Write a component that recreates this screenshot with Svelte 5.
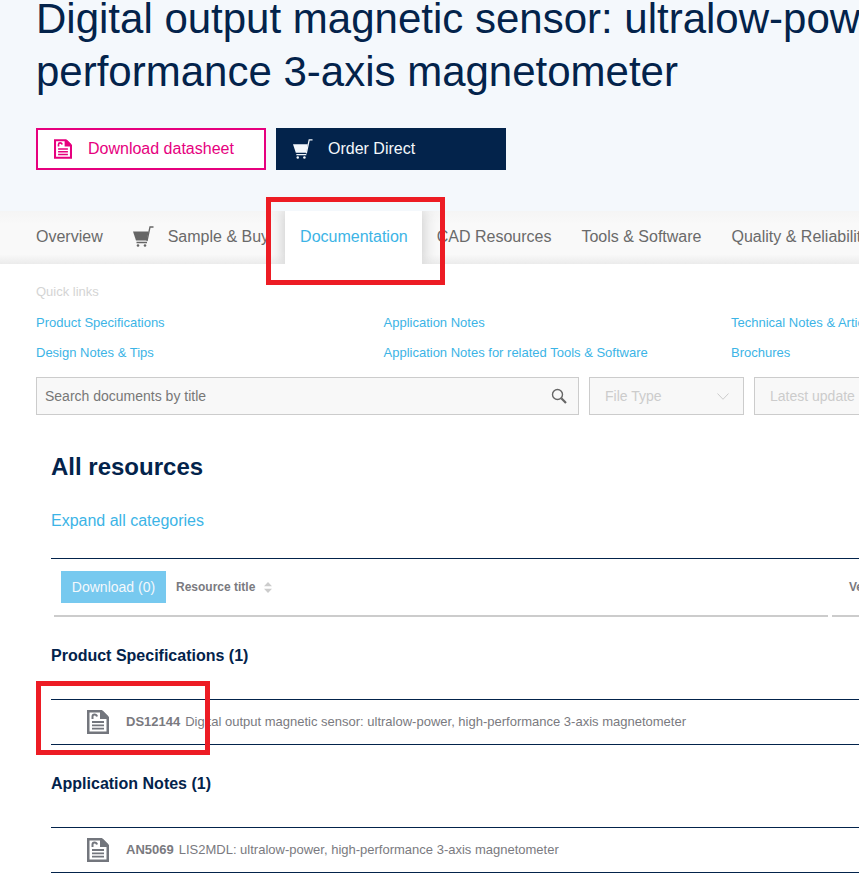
<script>
  // Product page, documentation tab. Red boxes are annotations over the page.
  const tabs = [
    { label: "Overview" },
    { label: "Sample & Buy", cart: true },
    { label: "Documentation", active: true },
    { label: "CAD Resources" },
    { label: "Tools & Software" },
    { label: "Quality & Reliability" },
  ];
  const quickLinks = [
    "Product Specifications", "Application Notes", "Technical Notes & Articles",
    "Design Notes & Tips", "Application Notes for related Tools & Software", "Brochures",
  ];
  const groups = [
    { title: "Product Specifications (1)", code: "DS12144", text: "Digital output magnetic sensor: ultralow-power, high-performance 3-axis magnetometer" },
    { title: "Application Notes (1)", code: "AN5069", text: "LIS2MDL: ultralow-power, high-performance 3-axis magnetometer" },
  ];
</script>

{#snippet docIcon(cls)}
  <svg class={cls} viewBox="0 0 22 24" width="22" height="24" aria-hidden="true">
    <path fill="currentColor" fill-rule="evenodd" d="M0 0H15L22 7V24H0ZM2.500 2.500V21.500H19.500V9H13V2.500Z" />
    <path fill="currentColor" d="M16 1L21.500 6.500H16Z" />
    <path fill="none" stroke="currentColor" stroke-width="2" d="M5.500 9V6.500Q5.500 4.500 7.500 4.500T10 6.500" />
    <path fill="none" stroke="currentColor" stroke-width="1.800" d="M5 12H17M5 15.300H17M5 18.600H17" />
  </svg>
{/snippet}

{#snippet cartIcon(cls)}
  <svg class={cls} viewBox="0 0 21 21" width="21" height="21" aria-hidden="true">
    <path fill="currentColor" d="M0 5.500H15.500L14 14.500H3Z" />
    <path fill="none" stroke="currentColor" stroke-width="1.300" d="M14 16.500H3.500M14 15L17 1H20.500" />
    <circle cx="5" cy="19.500" r="1.300" fill="currentColor" />
    <circle cx="12" cy="19.500" r="1.300" fill="currentColor" />
  </svg>
{/snippet}

<div class="page">
  <header class="hero">
    <h1>Digital output magnetic sensor: ultralow-power, high-<br />performance 3-axis magnetometer</h1>
    <div class="actions">
      <button class="btn btn-outline">{@render docIcon("btn-icon")}Download datasheet</button>
      <button class="btn btn-dark">{@render cartIcon("btn-icon")}Order Direct</button>
    </div>
  </header>

  <nav class="tabs">
    {#each tabs as t}
      <div class="tab" class:active={t.active} class:has-cart={t.cart}>
        {#if t.cart}{@render cartIcon("tab-cart")}{/if}
        {t.label}
      </div>
    {/each}
  </nav>

  <section class="quick">
    <div class="quick-title">Quick links</div>
    <div class="quick-grid">
      {#each quickLinks as q}<span class="link">{q}</span>{/each}
    </div>
  </section>

  <div class="filters">
    <div class="field search">
      <span>Search documents by title</span>
      <svg viewBox="0 0 16 16" width="16" height="16" aria-hidden="true">
        <circle cx="6.500" cy="6.500" r="5" fill="none" stroke="#666" stroke-width="1.400" />
        <path d="M10.300 10.300L15 15" stroke="#666" stroke-width="2.200" />
      </svg>
    </div>
    <div class="field select">
      <span>File Type</span>
      <svg viewBox="0 0 12 7" width="12" height="7" aria-hidden="true">
        <path d="M.5.500L6 6.300L11.500.500" fill="none" stroke="#ccc" />
      </svg>
    </div>
    <div class="field select last"><span>Latest update</span></div>
  </div>

  <main class="resources">
    <h2>All resources</h2>
    <div class="expand">Expand all categories</div>

    <div class="table-head">
      <div class="download">Download (0)</div>
      <div class="col-title">
        Resource title
        <svg viewBox="0 0 8 11" width="8" height="11" aria-hidden="true">
          <path d="M4 0L8 4.300H0ZM4 11L0 6.700H8Z" fill="#ccc" />
        </svg>
      </div>
      <div class="col-version">Version</div>
    </div>
    <div class="head-rule"><i></i><i></i></div>

    {#each groups as g}
      <h3>{g.title}</h3>
      <div class="row">
        {@render docIcon("row-icon")}
        <b>{g.code}</b>
        <span>{g.text}</span>
      </div>
    {/each}
  </main>

  <div class="mark mark-tab"></div>
  <div class="mark mark-row"></div>
</div>

<style>
  :global(body) { margin: 0; background: #fff; }
  .page {
    position: relative; width: 859px; height: 888px; overflow: hidden;
    font-family: "Liberation Sans", Arial, sans-serif; background: #fff;
  }

  .hero { height: 211px; background: #f4f8fc; padding-left: 36px; box-sizing: border-box; overflow: hidden; }
  h1 {
    margin: -8px 0 0; font-size: 42px; line-height: 53px; font-weight: 400; color: #03234b;
    white-space: nowrap; letter-spacing: 0;
  }
  .actions { display: flex; gap: 10px; margin-top: 30px; }
  .btn {
    width: 230px; height: 42px; box-sizing: border-box; display: flex; align-items: center;
    padding: 0; font: inherit; font-size: 16px; cursor: pointer; border: 0;
  }
  .btn-outline { background: #fff; border: 2px solid #e6007e; color: #e6007e; padding-left: 16px; }
  .btn-outline .btn-icon { margin-right: 16px; width: 18px; height: 20px; }
  .btn-dark { background: #03234b; color: #f4f8fc; padding-left: 17px; }
  .btn-dark .btn-icon { margin-right: 15px; width: 20px; height: 20px; }

  .tabs {
    display: flex; height: 53px; padding-left: 21px; white-space: nowrap; overflow: hidden;
    background: linear-gradient(#f5f5f5, #f9f9f9 25%, #f9f9f9 82%, #ebebeb);
    font-size: 16px; color: #6a6a6a;
  }
  .tab { display: flex; align-items: center; padding: 0 15px 2px; flex: none; }
  .tab.has-cart { padding-right: 16px; }
  .tab-cart { width: 21px; height: 21px; margin-right: 14px; color: #666; }
  .tab.active {
    background: #fff; color: #3cb4e6; position: relative; padding-right: 14px;
    box-shadow: 0 0 14px 1px #c8c8c8;
  }

  .quick { padding: 20px 0 0 36px; }
  .quick-title { font-size: 13px; line-height: 16px; color: #d4d4d4; }
  .quick-grid {
    display: grid; grid-template-columns: repeat(3, 347.500px); row-gap: 15px; margin-top: 15px;
    font-size: 13px; line-height: 15px; white-space: nowrap;
  }
  .link { color: #3cb4e6; }

  .filters { display: flex; gap: 10px; margin: 17px 0 0 36px; }
  .field {
    height: 38px; box-sizing: border-box; border: 1px solid #ccc; background: #f8f8f8;
    display: flex; align-items: center; justify-content: space-between; flex: none; font-size: 14px;
  }
  .search { width: 543px; padding: 0 11px 0 8px; color: #777; }
  .select { width: 155px; padding: 0 14px 0 15px; color: #ccc; }
  .select.last { width: 160px; }

  .resources { padding-left: 51px; }
  h2 { margin: 39px 0 0; font-size: 24px; line-height: 26px; font-weight: 700; color: #03234b; }
  .expand { margin-top: 31px; font-size: 16px; line-height: 20px; color: #3cb4e6; }

  .table-head {
    display: flex; align-items: center; height: 56px; margin-top: 27px; padding-left: 10px;
    border-top: 1px solid #03234b; white-space: nowrap;
  }
  .download {
    width: 105px; height: 32px; background: #77c9ef; color: #f4f8fc; font-size: 14px;
    display: flex; align-items: center; justify-content: center; flex: none;
  }
  .col-title {
    display: flex; align-items: center; gap: 9px; margin-left: 10px; width: 673px; flex: none;
    font-size: 12px; font-weight: 700; color: #7a7a80;
  }
  .col-version { font-size: 12px; font-weight: 700; color: #7a7a80; }
  .head-rule { display: flex; gap: 4px; height: 2px; margin-left: 3px; }
  .head-rule i { display: block; background: #ccc; width: 774px; flex: none; }
  .head-rule i + i { width: 40px; }

  h3 { margin: 29px 0 0; font-size: 16px; line-height: 20px; font-weight: 700; color: #03234b; }
  .row {
    display: flex; align-items: center; height: 46px; box-sizing: border-box; margin-top: 33px;
    padding-bottom: 1px;
    border-top: 1px solid #03234b; border-bottom: 1px solid #03234b;
    font-size: 13px; color: #7a7a80; white-space: nowrap;
  }
  .row b { margin-right: 5px; }
  .row-icon { color: #73767d; margin-left: 36px; margin-right: 17px; flex: none; }

  .mark { position: absolute; border: 5px solid #ed1c24; box-sizing: border-box; pointer-events: none; }
  .mark-tab { left: 266px; top: 197px; width: 179px; height: 88px; }
  .mark-row { left: 36px; top: 681px; width: 174px; height: 74px; }
</style>
